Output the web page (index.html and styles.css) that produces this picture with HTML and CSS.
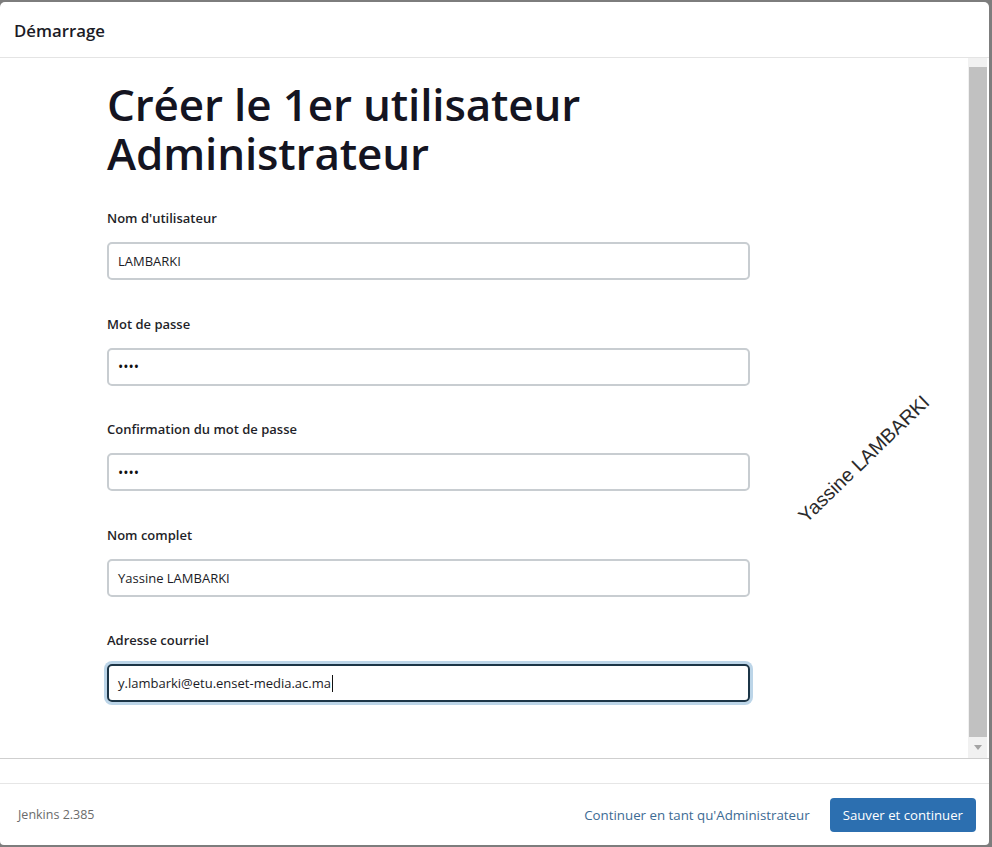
FILE: index.html
```html
<!DOCTYPE html>
<html lang="fr">
<head>
<meta charset="utf-8">
<title>Démarrage</title>
<link rel="stylesheet" href="styles.css">
</head>
<body>
<div class="dialog">
  <div class="header">Démarrage</div>
  <div class="frame">
    <div class="form-area">
      <h1 class="title"><span class="title-line">Créer le 1er utilisateur</span><span class="title-line">Administrateur</span></h1>
      <div class="field">
        <label class="label">Nom d'utilisateur</label>
        <div class="input">LAMBARKI</div>
      </div>
      <div class="field">
        <label class="label">Mot de passe</label>
        <div class="input"><span class="dots">••••</span></div>
      </div>
      <div class="field">
        <label class="label">Confirmation du mot de passe</label>
        <div class="input"><span class="dots">••••</span></div>
      </div>
      <div class="field">
        <label class="label">Nom complet</label>
        <div class="input">Yassine LAMBARKI</div>
      </div>
      <div class="field">
        <label class="label">Adresse courriel</label>
        <div class="input focused">y.lambarki@etu.enset-media.ac.ma<span class="caret"></span></div>
      </div>
      <div class="watermark">Yassine LAMBARKI</div>
    </div>
    <div class="scrollbar">
      <div class="sb-up"></div>
      <div class="sb-thumb"></div>
      <div class="sb-down"><span class="sb-arrow"></span></div>
    </div>
  </div>
  <div class="spacer"></div>
  <div class="footer">
    <span class="version">Jenkins 2.385</span>
    <div class="actions">
      <a class="link">Continuer en tant qu'Administrateur</a>
      <button class="btn">Sauver et continuer</button>
    </div>
  </div>
</div>
</body>
</html>
```

FILE: styles.css
```css
* { box-sizing: border-box; }
html, body { margin: 0; padding: 0; }
body {
  background: #7d7d7d;
  width: 992px;
  height: 847px;
  overflow: hidden;
  font-family: "Open Sans", "Noto Sans", sans-serif;
  color: #1b1b26;
}
.dialog {
  width: 989px;
  height: 843px;
  margin-top: 2px;
  background: #fff;
  border-radius: 5px 5px 4px 4px;
  display: flex;
  flex-direction: column;
  overflow: hidden;
}
.header {
  height: 56px;
  flex: none;
  border-bottom: 1px solid #e4e4e4;
  padding: 1px 14px 0;
  display: flex;
  align-items: center;
  font-size: 16.8px;
  font-weight: 600;
  color: #1b1b26;
}
.frame {
  height: 701px;
  flex: none;
  border-bottom: 1px solid #cfcfcf;
  display: flex;
}
.form-area {
  flex: 1;
  position: relative;
  padding: 22px 0 0 107px;
}
.title {
  margin: 0 0 30px;
  font-size: 44px;
  font-weight: 600;
  color: #141421;
  letter-spacing: -0.15px;
}
.title-line {
  display: block;
  height: 49px;
  line-height: 49px;
}
.field {
  width: 643px;
  margin-bottom: 33.5px;
}
.label {
  display: block;
  font-size: 13px;
  line-height: 20px;
  font-weight: 600;
  color: #1f1f29;
  margin-bottom: 14px;
}
.input {
  height: 38px;
  border: 2px solid #c8cdd1;
  border-radius: 5px;
  padding: 0 9px;
  display: flex;
  align-items: center;
  font-size: 13px;
  color: #1b1b26;
}
.dots {
  font-size: 14px;
  color: #111;
}
.input.focused {
  border-color: #1c3547;
  box-shadow: 0 0 0 3px #bcd5e8;
}
.caret {
  display: inline-block;
  width: 1px;
  height: 17px;
  background: #111;
  margin-left: 1px;
}
.watermark {
  position: absolute;
  left: 864px;
  top: 401px;
  transform: translate(-50%, -50%) rotate(-44deg);
  font-family: "Liberation Sans", Arial, sans-serif;
  font-size: 19.6px;
  color: #2b2b2b;
  white-space: nowrap;
}
.scrollbar {
  width: 19px;
  margin-right: 2px;
  flex: none;
  background: #f1f1f1;
  display: flex;
  flex-direction: column;
}
.sb-up { height: 9px; flex: none; }
.sb-thumb {
  flex: 1;
  margin-left: 1px;
  background: #c1c1c1;
}
.sb-down {
  height: 21px;
  flex: none;
  display: flex;
  align-items: center;
  justify-content: center;
}
.sb-arrow {
  width: 0;
  height: 0;
  border-left: 4px solid transparent;
  border-right: 4px solid transparent;
  border-top: 5px solid #a3a3a3;
}
.spacer {
  height: 25px;
  flex: none;
  border-bottom: 1px solid #e6e6e6;
}
.footer {
  flex: 1;
  display: flex;
  align-items: center;
  justify-content: space-between;
  padding: 0 13px 0 18px;
}
.version {
  font-size: 12.5px;
  color: #6b6b6b;
}
.actions {
  display: flex;
  align-items: center;
  gap: 20px;
}
.link {
  font-size: 13.3px;
  color: #3d6b94;
  text-decoration: none;
}
.btn {
  height: 34px;
  padding: 0 13px;
  border: none;
  border-radius: 4px;
  background: #2c6fb0;
  color: #fff;
  font-family: inherit;
  font-size: 13.2px;
}
```
